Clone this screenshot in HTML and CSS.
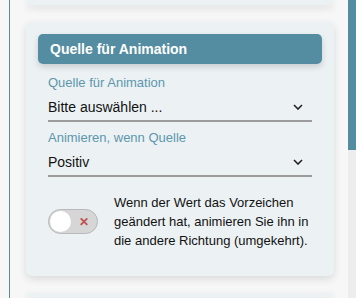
FILE: index.html
```html
<!DOCTYPE html>
<html lang="de">
<head>
    <meta charset="UTF-8">
    <meta name="viewport" content="width=device-width, initial-scale=1.0">
    <title>Animation</title>
    <link rel="stylesheet" href="styles.css">
</head>
<body>

<div class="panel">
    <div class="card card-stub"></div>

    <div class="card">
        <div class="card-header">Quelle für Animation</div>

        <div class="field">
            <div class="field-label">Quelle für Animation</div>
            <div class="select">
                <span>Bitte auswählen ...</span>
                <svg class="chevron" width="10" height="6" viewBox="0 0 10 6"><path d="M1 1l4 4 4-4" fill="none" stroke="#222" stroke-width="1.6"/></svg>
            </div>
        </div>

        <div class="field">
            <div class="field-label">Animieren, wenn Quelle</div>
            <div class="select">
                <span>Positiv</span>
                <svg class="chevron" width="10" height="6" viewBox="0 0 10 6"><path d="M1 1l4 4 4-4" fill="none" stroke="#222" stroke-width="1.6"/></svg>
            </div>
        </div>

        <div class="toggle-row">
            <div class="toggle">
                <div class="knob"></div>
                <span class="toggle-x">&#x2715;</span>
            </div>
            <p class="toggle-text">Wenn der Wert das Vorzeichen geändert hat, animieren Sie ihn in die andere Richtung (umgekehrt).</p>
        </div>
    </div>

    <div class="card card-next"></div>
</div>

<div class="scrollbar">
    <div class="scroll-thumb"></div>
</div>

</body>
</html>
```

FILE: styles.css
```css
body {
    margin: 0;
    height: 298px;
    overflow: hidden;
    display: flex;
    background: #f7f7f7;
    font-family: "Liberation Sans", Arial, sans-serif;
}
.panel {
    margin-left: 9px;
    border-left: 1px solid #5a8a9c;
    padding-left: 16px;
    width: 308px;
    display: flex;
    flex-direction: column;
    gap: 17px;
}
.card {
    background: #ecf1f4;
    border-radius: 6px;
    box-shadow: 0 3px 8px rgba(0, 0, 0, 0.12);
    padding: 12px 12px 0;
    flex-shrink: 0;
}
.card-stub {
    height: 5px;
    padding: 0;
    border-radius: 0 0 6px 6px;
}
.card-next {
    height: 4px;
    padding: 0;
    border-radius: 6px 6px 0 0;
}
.card-header {
    background: #548da1;
    color: #fff;
    font-weight: bold;
    font-size: 14px;
    height: 30px;
    line-height: 30px;
    padding-left: 12px;
    border-radius: 5px;
    box-shadow: 0 3px 6px rgba(0, 0, 0, 0.15);
}
.field {
    padding: 0 10px;
}
.field-label {
    color: #5c97ac;
    font-size: 13px;
    line-height: 16px;
    margin-top: 11px;
}
.select {
    display: flex;
    justify-content: space-between;
    align-items: center;
    font-size: 14px;
    color: #111;
    line-height: 18px;
    padding: 7px 0 4px;
    border-bottom: 2px solid #9b9b9b;
}
.chevron {
    margin-right: 9px;
}
.field + .field .field-label {
    margin-top: 8px;
}
.toggle-row {
    display: flex;
    align-items: center;
    gap: 16px;
    padding: 0 10px 25px;
    margin-top: 15px;
    height: 59px;
}
.toggle {
    box-sizing: border-box;
    width: 50px;
    height: 25px;
    border: 1px solid #b8b8b8;
    border-radius: 13px;
    background: #d6d6d6;
    display: flex;
    align-items: center;
    flex-shrink: 0;
    padding: 0 1px;
}
.knob {
    width: 21px;
    height: 21px;
    border-radius: 50%;
    background: #fff;
}
.toggle-x {
    color: #c0504f;
    font-size: 12px;
    font-weight: bold;
    margin-left: 8px;
}
.toggle-text {
    margin: 0;
    font-size: 13px;
    line-height: 19px;
    color: #111;
}
.scrollbar {
    margin-left: 14px;
    width: 8px;
    background: #ededed;
}
.scroll-thumb {
    height: 150px;
    background: #548da1;
}
```
